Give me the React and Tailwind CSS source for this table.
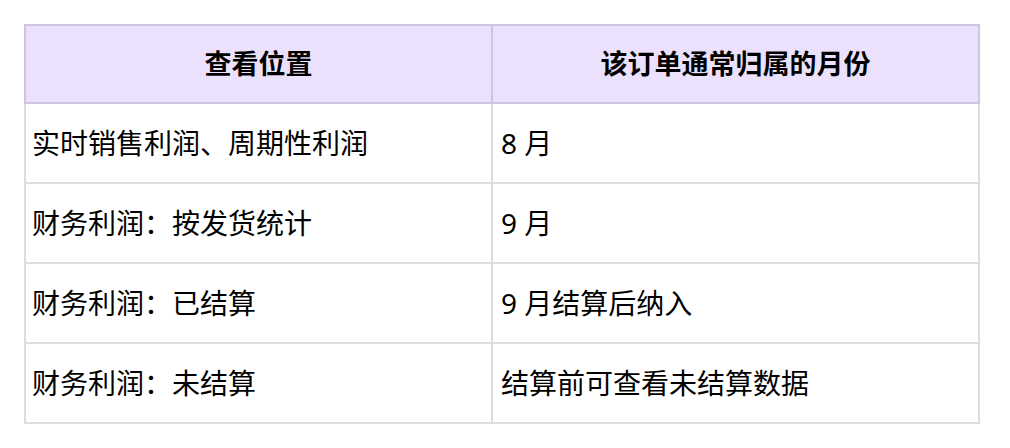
const rows = [
  ["实时销售利润、周期性利润", "8 月"],
  ["财务利润：按发货统计", "9 月"],
  ["财务利润：已结算", "9 月结算后纳入"],
  ["财务利润：未结算", "结算前可查看未结算数据"],
];

export default function App() {
  return (
    <div
      className="w-[1010px] h-[448px] bg-white pt-6 pl-6"
      style={{ fontFamily: '"Noto Sans", "Noto Sans CJK SC", sans-serif' }}
    >
      <table className="w-[956px] border-collapse text-black">
        <thead>
          <tr className="h-[78px] bg-[#ebe1fc] text-[27px]">
            <th className="w-[467px] border-2 border-[#cec5e2] font-bold text-center">
              查看位置
            </th>
            <th className="border-2 border-[#cec5e2] font-bold text-center">
              该订单通常归属的月份
            </th>
          </tr>
        </thead>
        <tbody className="text-[28px]">
          {rows.map((r, i) => (
            <tr key={i} className="h-[80px]">
              <td className="border-2 border-[#dddddd] pl-[6px] align-middle">
                {r[0]}
              </td>
              <td className="border-2 border-[#dddddd] pl-[8px] align-middle">
                {r[1]}
              </td>
            </tr>
          ))}
        </tbody>
      </table>
    </div>
  );
}
